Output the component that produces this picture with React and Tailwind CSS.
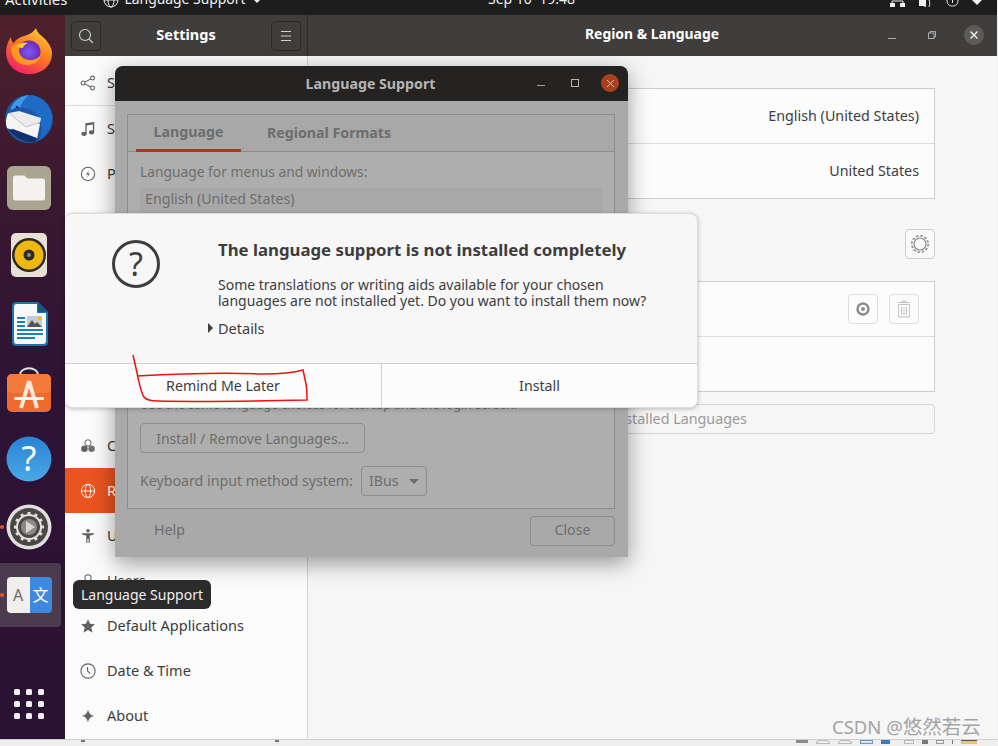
import React from "react";

const font = { fontFamily: '"Noto Sans","Noto Sans CJK SC",sans-serif' };

function Firefox() {
  return (
    <svg width="48" height="48" viewBox="0 0 48 48">
      <defs>
        <linearGradient id="ff1" x1="0.8" y1="0" x2="0.2" y2="1">
          <stop offset="0" stopColor="#ffd23c" />
          <stop offset="0.45" stopColor="#ff7a1f" />
          <stop offset="1" stopColor="#f0186e" />
        </linearGradient>
        <radialGradient id="ff2" cx="0.5" cy="0.5" r="0.6">
          <stop offset="0" stopColor="#7a5bf0" />
          <stop offset="1" stopColor="#6a1fb0" />
        </radialGradient>
      </defs>
      <path d="M31 2c1 5 5 7 9 11 5 5 7 11 7 14 0 13-10 21-23 21S1 39 1 26c0-5 2-11 5-15 0 3 1 5 3 6 2-4 6-6 10-7 4-1 9-3 12-8z" fill="url(#ff1)" />
      <circle cx="24" cy="26" r="11.5" fill="url(#ff2)" />
      <path d="M6 21c5-4 12-5 17-3-5 0-8 2-9 6 0 6 5 10 11 10 5 0 9-2 11-6-1 7-7 11-14 11C12 39 6 31 6 21z" fill="#ff9a1f" />
      <path d="M12 20c3-3 7-4 11-3-3 1-5 3-5 5-2 0-4-1-6-2z" fill="#ffd23c" />
    </svg>
  );
}
function Thunderbird() {
  return (
    <svg width="50" height="50" viewBox="0 0 50 50">
      <circle cx="25" cy="25" r="24" fill="#1b57a8" />
      <path d="M26 1c11 1 21 10 22 22 0 9-4 17-12 22 3-8 2-18-4-25-4-5-11-7-17-6 2-6 6-10 11-13z" fill="#1f6cc6" />
      <path d="M8 12c3-6 9-10 17-11-4 3-7 7-9 12-3 0-6 1-9 3-1-1 0-3 1-4z" fill="#3f9be8" />
      <circle cx="13" cy="13" r="1.200" fill="#102a55" />
      <path d="M4 19l9 3 23 8-3 15-30-11c-2-5-1-10 1-15z" fill="#f5f5f5" />
      <path d="M5 19l10-2 22 7-1 5-14 4z" fill="#ececec" />
      <path d="M5 19l17 14 14-5" fill="none" stroke="#b5b5b5" strokeWidth="0.8" />
      <path d="M5 36c5 6 12 11 20 12 2 0 5 0 7-1l1-3-24-9z" fill="#122f6e" />
    </svg>
  );
}
function Files() {
  return (
    <svg width="46" height="46" viewBox="0 0 46 46">
      <rect x="1" y="1" width="44" height="44" rx="6" fill="#aaa591" />
      <path d="M7 13a2.5 2.5 0 0 1 2.5-2.5h9l3 3H36.500a2.500 2.500 0 0 1 2.500 2.500V33a2.500 2.500 0 0 1-2.500 2.500h-27A2.500 2.500 0 0 1 7 33z" fill="#f4f2ee" />
    </svg>
  );
}
function Rhythmbox() {
  return (
    <svg width="40" height="46" viewBox="0 0 40 46">
      <rect x="2" y="1" width="36" height="44" rx="5" fill="#e6e1d3" />
      <circle cx="20" cy="23" r="17" fill="#2c2a28" />
      <circle cx="20" cy="23" r="14.500" fill="#efb80e" />
      <circle cx="20" cy="23" r="5.500" fill="#2c2a28" />
      <circle cx="20" cy="23" r="2" fill="#8f8a80" />
    </svg>
  );
}
function Writer() {
  return (
    <svg width="40" height="46" viewBox="0 0 40 46">
      <path d="M3 5a4 4 0 0 1 4-4h22l10 10v30a4 4 0 0 1-4 4H7a4 4 0 0 1-4-4z" fill="#1b75a8" />
      <path d="M5 6a3 3 0 0 1 3-3h20v9h9v28a3 3 0 0 1-3 3H8a3 3 0 0 1-3-3z" fill="#f6f8f9" />
      <path d="M29 1l10 10h-10z" fill="#135a85" />
      <g fill="#1f7fb8">
        <rect x="8" y="16" width="8" height="2" />
        <rect x="8" y="20" width="8" height="2" />
        <rect x="8" y="24" width="8" height="2" />
        <rect x="8" y="28" width="26" height="2" />
        <rect x="8" y="32" width="26" height="2" />
        <rect x="8" y="36" width="18" height="2" />
      </g>
      <rect x="18" y="15" width="15" height="11" fill="#c6ccd0" />
      <path d="M18 26l5-7 3 4 2-2 5 5z" fill="#555" />
      <rect x="29" y="16" width="3" height="3" fill="#f0b429" />
    </svg>
  );
}
function Software() {
  return (
    <svg width="46" height="46" viewBox="0 0 46 46">
      <path d="M14 8c0-9 18-9 18 0" fill="none" stroke="#e9dfcf" strokeWidth="1.800" />
      <rect x="1" y="7" width="44" height="38" rx="5" fill="#ef6a2e" />
      <rect x="1" y="7" width="44" height="19" rx="5" fill="#f47a3c" />
      <path d="M23 14L15 41M23 14l8 27" stroke="#fbe9dd" strokeWidth="4" fill="none" />
      <rect x="8" y="30" width="30" height="3" rx="1.500" fill="#fdf3ec" />
    </svg>
  );
}
function Help() {
  return (
    <svg width="46" height="46" viewBox="0 0 46 46">
      <defs>
        <linearGradient id="hp" x1="0" y1="0" x2="0" y2="1">
          <stop offset="0" stopColor="#2a82d4" />
          <stop offset="1" stopColor="#4aa8e6" />
        </linearGradient>
      </defs>
      <circle cx="23" cy="23" r="22.500" fill="url(#hp)" />
      <text x="23" y="35" textAnchor="middle" fontSize="34" fill="#fff" fontFamily="Noto Sans">?</text>
    </svg>
  );
}
function SettingsIcon() {
  const teeth = [0, 30, 60, 90, 120, 150];
  return (
    <svg width="46" height="46" viewBox="0 0 46 46">
      <circle cx="23" cy="23" r="22.500" fill="#e2e0dc" />
      <circle cx="23" cy="23" r="19" fill="#4a4846" />
      <g fill="#e2e0dc">
        {teeth.map((a) => (
          <rect key={a} x="21.500" y="8" width="3" height="30" transform={`rotate(${a} 23 23)`} />
        ))}
      </g>
      <circle cx="23" cy="23" r="13" fill="#e2e0dc" />
      <circle cx="23" cy="23" r="11" fill="#4a4846" />
      <circle cx="23" cy="23" r="8" fill="#8c8a86" />
      <path d="M20 17l9 6-9 6z" fill="#d8d6d2" />
    </svg>
  );
}
function LangIcon() {
  return (
    <div className="w-[45px] h-[36px] flex rounded-[4px] overflow-hidden">
      <div className="w-[23px] bg-[#f1efeb] text-[#6b6b6b] text-[16px] flex items-center justify-center">A</div>
      <div className="w-[22px] bg-[#3f88dd] text-white text-[16px] flex items-center justify-center">文</div>
    </div>
  );
}

function Row({ icon, label, active }) {
  return (
    <div className={active ? "h-[45px] flex items-center pl-[15px] bg-[#e95420] text-white" : "h-[45px] flex items-center pl-[15px] text-[#3d3d3d]"}>
      <span className={active ? "w-[27px] text-white flex" : "w-[27px] text-[#616161] flex"}>{icon}</span>
      <span className="text-[14.5px] whitespace-nowrap">{label}</span>
    </div>
  );
}

const S = (p) => <svg width="16" height="16" viewBox="0 0 18 18" fill="none" stroke="currentColor" strokeWidth="1.200" {...p} />;
const icons = {
  share: <S><circle cx="3.500" cy="9" r="2.200" /><circle cx="14" cy="3.500" r="2.200" /><circle cx="14" cy="14.500" r="2.200" /><path d="M5.500 8l6.500-3.500M5.500 10l6.500 3.500" /></S>,
  music: <S fill="currentColor" stroke="none"><path d="M6 2.500l10-1.500v11.500h-1.500V4L7.500 5v9.500H6z" /><ellipse cx="4.500" cy="14.500" rx="3" ry="2.300" /><ellipse cx="13" cy="12.800" rx="3" ry="2.300" /></S>,
  power: <S><circle cx="9" cy="9" r="7.500" /><path d="M10 4.500L7 9.800h2.200L8 13.500l3-5.300H8.800z" fill="currentColor" stroke="none" /></S>,
  display: <S><rect x="2" y="3" width="14" height="10" rx="2" /></S>,
  blank: <S stroke="none" />,
  color: <S fill="currentColor" stroke="none"><circle cx="9" cy="5.500" r="3.500" fill="none" stroke="currentColor" strokeWidth="1.100" /><circle cx="5" cy="12" r="3.700" /><circle cx="13" cy="12" r="3.700" opacity="0.9" /></S>,
  globe: <svg width="16" height="16" viewBox="0 0 18 18" fill="none" stroke="currentColor" strokeWidth="1"><circle cx="9" cy="9" r="7.500" /><ellipse cx="9" cy="9" rx="3" ry="7.500" /><path d="M1.500 9h15" /></svg>,
  person: <S fill="currentColor" stroke="none"><circle cx="9" cy="3" r="2" /><path d="M2.500 6h13v1.600l-4.500.9V17H9.700v-4.500H8.300V17H7V8.500l-4.500-.9z" /></S>,
  user: <S><circle cx="9" cy="5.500" r="3.500" /><path d="M2.500 16c0-4 3-6 6.500-6s6.500 2 6.500 6" /></S>,
  star: <S fill="currentColor" stroke="none"><path d="M9 1.500l2.300 5 5.500.6-4.100 3.700 1.200 5.400L9 13.500 4.100 16.200l1.200-5.400L1.200 7.100l5.500-.6z" /></S>,
  clock: <S><circle cx="9" cy="9" r="8" /><path d="M8.500 4.500V9l3 3" /></S>,
  about: <S fill="currentColor" stroke="none"><path d="M9 1.500c.8 4.500 2.800 6.700 7 7.500-4.200.8-6.200 3-7 7.500-.8-4.500-2.800-6.700-7-7.500 4.200-.8 6.200-3 7-7.500z" /></S>,
};

const dockItems = [
  ["mt-[2px]", <Firefox />],
  ["mt-[15px]", <Thunderbird />],
  ["mt-[15px]", <Files />],
  ["mt-[13px]", <Rhythmbox />],
  ["mt-[15px]", <Writer />],
  ["mt-[12px]", <Software />],
  ["mt-[15px]", <Help />],
  ["mt-[14px]", <SettingsIcon />],
  ["mt-[14px]", <LangIcon />],
];

function Dock() {
  return (
    <div className="relative w-[65px] shrink-0 flex flex-col items-center pr-[7px] pt-[6px] bg-[linear-gradient(180deg,#4e202b_0%,#3a1830_25%,#2d1336_55%,#2a1233_100%)]">
      <div className="absolute left-0 top-[548px] w-[61px] h-[64px] bg-[#4c3a4f] rounded-r-[4px]" />
      <div className="absolute left-0 top-[510px] w-[4px] h-[4px] rounded-full bg-[#e95420]" />
      <div className="absolute left-0 top-[578px] w-[4px] h-[4px] rounded-full bg-[#e95420]" />
      {dockItems.map(([m, el], i) => (
        <div key={i} className={"relative h-[54px] w-[54px] flex items-center justify-center " + m}>{el}</div>
      ))}
      <div className="mt-auto mb-[20px] grid grid-cols-3 gap-x-[6px] gap-y-[6px] relative">
        {Array.from({ length: 9 }).map((_, i) => (
          <span key={i} className="w-[6px] h-[6px] rounded-[1.500px] bg-[#efefef]" />
        ))}
      </div>
    </div>
  );
}

function Sidebar() {
  return (
    <div className="w-[243px] shrink-0 bg-[#fbfbfb] border-r border-[#d4d4d4] overflow-hidden">
      <div className="pt-[4px]"><Row icon={icons.share} label="Sharing" /></div>
      <div className="h-px bg-[#dcdcdc]" />
      <Row icon={icons.music} label="Sound" />
      <Row icon={icons.power} label="Power" />
      <Row icon={icons.display} label="Displays" />
      <Row icon={icons.blank} label="Mouse & Touchpad" />
      <Row icon={icons.blank} label="Keyboard Shortcuts" />
      <Row icon={icons.blank} label="Printers" />
      <Row icon={icons.blank} label="Removable Media" />
      <div className="h-[2px]" />
      <Row icon={icons.color} label="Color" />
      <Row active icon={icons.globe} label="Region & Language" />
      <Row icon={icons.person} label="Universal Access" />
      <Row icon={icons.user} label="Users" />
      <Row icon={icons.star} label="Default Applications" />
      <Row icon={icons.clock} label="Date & Time" />
      <Row icon={icons.about} label="About" />
    </div>
  );
}

function Content() {
  return (
    <div className="flex-1 bg-[#f6f6f6] pt-[32px] pl-[57px] pr-[62px] text-[#3d3d3d] text-[14.3px]">
      <div className="border border-[#cdcdcd] bg-[#fcfcfc]">
        <div className="h-[55px] flex items-center justify-between px-[15px] border-b border-[#dcdcdc]">
          <span>Language</span><span>English (United States)</span>
        </div>
        <div className="h-[54px] flex items-center justify-between px-[15px]">
          <span>Formats</span><span>United States</span>
        </div>
      </div>
      <div className="h-[82px] pt-[8px] flex items-center justify-between">
        <span className="font-bold">Input Sources</span>
        <div className="w-[30px] h-[30px] border border-[#cfcfcf] rounded-[4px] flex items-center justify-center bg-[#f8f8f8] text-[#8a8a8a]">
          <svg width="20" height="20" viewBox="0 0 20 20" fill="none" stroke="currentColor" strokeWidth="1.200"><circle cx="10" cy="10" r="6" /><circle cx="10" cy="10" r="8.200" strokeDasharray="2.500 1.800" strokeWidth="1.600" /></svg>
        </div>
      </div>
      <div className="border border-[#cdcdcd] bg-[#fcfcfc]">
        <div className="h-[55px] flex items-center justify-end gap-[11px] pr-[15px] border-b border-[#dcdcdc]">
          <div className="w-[30px] h-[30px] border border-[#dedede] rounded-[4px] flex items-center justify-center">
            <svg width="16" height="16" viewBox="0 0 16 16"><circle cx="8" cy="8" r="5.500" fill="none" stroke="#8c8c8c" strokeWidth="2.400" /><circle cx="8" cy="8" r="2" fill="#8c8c8c" /></svg>
          </div>
          <div className="w-[30px] h-[30px] border border-[#dedede] rounded-[4px] flex items-center justify-center">
            <svg width="14" height="18" viewBox="0 0 14 18" fill="none" stroke="#c2c2c2"><path d="M1.500 4.500h11v12.500h-11zM1 2.500h12M5 2.500V1h4v1.500M4.500 7v8M7 7v8M9.500 7v8" /></svg>
          </div>
        </div>
        <div className="h-[54px]" />
      </div>
      <div className="mt-[12px] h-[30px] border border-[#d4d4d4] rounded-[4px] flex items-center justify-center text-[#9a9a9a]">Manage Installed Languages</div>
    </div>
  );
}

function LanguageWindow() {
  return (
    <div className="absolute left-[115px] top-[66px] w-[513px] h-[491px] bg-[#a9a9a9] rounded-t-[8px] shadow-[0_6px_22px_rgba(0,0,0,0.4)] text-[#6d6d6d] flex flex-col">
      <div className="h-[35px] shrink-0 bg-[#252322] rounded-t-[8px] relative flex items-center justify-center">
        <span className="font-bold text-[14.2px] text-[#b5b5b5] pr-[2px]">Language Support</span>
        <div className="absolute right-[9px] top-[8px] flex items-center">
          <span className="w-[8px] h-px bg-[#a0a0a0] mt-[4px] mr-[26px]" />
          <span className="w-[8px] h-[8px] border border-[#b5b5b5] mr-[22px]" />
          <span className="w-[18px] h-[18px] rounded-full bg-[#a8421c] flex items-center justify-center">
            <svg width="9" height="9" viewBox="0 0 9 9" stroke="#d9c2b8" strokeWidth="1"><path d="M1 1l7 7M8 1l-7 7" /></svg>
          </span>
        </div>
      </div>
      <div className="ml-[12px] mr-[13px] mt-[13px] h-[395px] border border-[#8d8d8d] bg-[#aeaeae]">
        <div className="h-[37px] bg-[#a8a8a8] border-b border-[#8d8d8d] flex pl-[8px] text-[14.2px] font-bold">
          <div className="w-[105px] h-[37px] border-b-[3px] border-[#a83c1a] flex items-center justify-center">Language</div>
          <div className="ml-[26px] flex items-center whitespace-nowrap">Regional Formats</div>
        </div>
        <div className="px-[12px] text-[14.2px]">
          <div className="mt-[10px] leading-[20px] text-[13.8px]">Language for menus and windows:</div>
          <div className="mt-[6px] h-[199px] bg-[#a8a8a8] border-b border-[#9a9a9a] pl-[5px] leading-[22px]">English (United States)</div>
          <div className="mt-[10px] text-[12.5px] leading-[16px] whitespace-nowrap">Use the same language choices for startup and the login screen.</div>
          <div className="mt-[10px] w-[225px] h-[30px] border border-[#8d8d8d] rounded-[4px] flex items-center justify-center text-[14px]">Install / Remove Languages...</div>
          <div className="mt-[13px] flex items-center">
            <span>Keyboard input method system:</span>
            <div className="ml-[8px] w-[66px] h-[30px] border border-[#8d8d8d] rounded-[4px] flex items-center justify-between px-[7px]">
              <span>IBus</span>
              <span className="w-0 h-0 border-x-[5px] border-x-transparent border-t-[5px] border-t-[#6d6d6d]" />
            </div>
          </div>
        </div>
      </div>
      <div className="ml-[12px] mr-[13px] mt-[7px] flex items-center justify-between text-[14.2px]">
        <span className="ml-[27px] -mt-[2px]">Help</span>
        <div className="w-[85px] h-[30px] border border-[#8d8d8d] rounded-[4px] flex items-center justify-center pb-[2px]">Close</div>
      </div>
    </div>
  );
}

function Dialog() {
  return (
    <div className="absolute left-[65px] top-[213px] w-[633px] h-[195px] bg-[#f7f7f7] rounded-[8px] border border-[#dcdcdc] border-l-0 shadow-[0_1px_4px_rgba(0,0,0,0.25)] flex flex-col text-[#3d3d3d]">
      <div className="flex-1 flex">
        <div className="w-[153px] shrink-0 pl-[47px] pt-[26px]">
          <div className="w-[48px] h-[48px] rounded-full border-[3px] border-[#3d3d3d] flex items-center justify-center text-[32px] leading-none">?</div>
        </div>
        <div className="pt-[23px]">
          <div className="text-[16.8px] font-bold leading-[26px] whitespace-nowrap">The language support is not installed completely</div>
          <div className="mt-[14px] text-[14px] leading-[16px] whitespace-nowrap">
            <div>Some translations or writing aids available for your chosen</div>
            <div>languages are not installed yet. Do you want to install them now?</div>
          </div>
          <div className="mt-[9px] -ml-[10px] flex items-center text-[14.5px] leading-[20px]">
            <span className="w-0 h-0 border-y-[5px] border-y-transparent border-l-[5px] border-l-[#3d3d3d] mr-[5px]" />
            Details
          </div>
        </div>
      </div>
      <div className="h-[44px] shrink-0 bg-[#fcfcfc] border-t border-[#cfcfcf] rounded-b-[8px] flex text-[14.2px]">
        <div className="w-[317px] border-r border-[#cfcfcf] flex items-center justify-center">Remind Me Later</div>
        <div className="flex-1 flex items-center justify-center">Install</div>
      </div>
    </div>
  );
}

export default function App() {
  return (
    <div style={font} className="relative w-[998px] h-[746px] overflow-hidden bg-[#f2f2f2]">
      <div className="w-[997px] h-[746px] flex flex-col">
        <div className="h-[15px] shrink-0 bg-[#1d1d1d] overflow-hidden relative text-[#f0f0f0] flex justify-between">
          <div className="flex -mt-[12px] h-[22px] leading-[22px]">
            <span className="ml-[5px] text-[15px]">Activities</span>
            <span className="ml-[35px] flex items-center text-[13.9px]">
              <svg className="mt-[2px]" width="16" height="16" viewBox="0 0 16 16" fill="none" stroke="#f0f0f0"><circle cx="8" cy="8" r="7" /><ellipse cx="8" cy="8" rx="3" ry="7" /><path d="M1 8h14" /></svg>
              <span className="ml-[6px]">Language Support</span>
              <span className="ml-[6px] mt-[3px] w-0 h-0 border-x-[5px] border-x-transparent border-t-[5px] border-t-[#f0f0f0]" />
            </span>
          </div>
          <div className="-mt-[12px] h-[22px] leading-[22px] text-[14px] absolute left-[488px]">Sep 10&nbsp;&nbsp;19:48</div>
          <div className="flex items-start gap-[13px] pr-[15px]">
            <svg width="16" height="7" viewBox="0 0 16 7" fill="#f0f0f0"><rect x="0" y="3" width="5" height="4" /><rect x="10" y="3" width="5" height="4" /><path d="M2 3V1h11v2" fill="none" stroke="#f0f0f0" /></svg>
            <svg width="14" height="7" viewBox="0 0 14 7" fill="#f0f0f0"><path d="M0 0h7v7L4 6H0z" /><path d="M10 0c1 2 1 5 0 7" fill="none" stroke="#f0f0f0" /></svg>
            <svg width="13" height="7" viewBox="0 0 13 7" fill="none" stroke="#f0f0f0"><path d="M1 0c0 4 2 6 5.500 6S12 4 12 0M6.500 0v3" /></svg>
            <span className="w-0 h-0 border-x-[5px] border-x-transparent border-t-[5px] border-t-[#f0f0f0]" />
          </div>
        </div>
        <div className="flex-1 flex min-h-0">
          <Dock />
          <div className="flex-1 flex flex-col min-w-0">
            <div className="h-[41px] shrink-0 bg-[#3f3e3c] flex text-white">
              <div className="w-[243px] shrink-0 border-r border-[#2e2d2b] flex items-center justify-between px-[6px]">
                <div className="w-[30px] h-[30px] border border-[#2a2928] rounded-[4px] flex items-center justify-center">
                  <svg width="16" height="16" viewBox="0 0 16 16" fill="none" stroke="#cfcfcf" strokeWidth="1.100"><circle cx="7" cy="7" r="5.500" /><path d="M11 11l4 4" /></svg>
                </div>
                <span className="font-bold text-[14.5px] pb-[2px]">Settings</span>
                <div className="w-[30px] h-[30px] border border-[#2a2928] rounded-[4px] flex items-center justify-center">
                  <svg width="12" height="10" viewBox="0 0 12 10" stroke="#cfcfcf"><path d="M1 .5h10M1 5h10M1 9.500h10" /></svg>
                </div>
              </div>
              <div className="flex-1 relative flex items-center justify-center">
                <span className="font-bold text-[13.9px] pb-[2px] pr-[1px]">Region & Language</span>
                <div className="absolute right-[13px] top-[10px] flex items-center">
                  <span className="w-[8px] h-px bg-[#a8a8a8] mt-[6px] mr-[32px]" />
                  <svg className="mr-[28px]" width="8" height="8" viewBox="0 0 8 8" fill="none" stroke="#a8a8a8"><rect x="0.500" y="2" width="5.500" height="5.500" /><path d="M2 2V.5h5.500V6H6" /></svg>
                  <span className="w-[20px] h-[20px] rounded-full bg-[#5d5c5a] flex items-center justify-center">
                    <svg width="10" height="10" viewBox="0 0 10 10" stroke="#f4f4f4" strokeWidth="1.300"><path d="M1.500 1.500l7 7M8.500 1.500l-7 7" /></svg>
                  </span>
                </div>
              </div>
            </div>
            <div className="flex-1 flex min-h-0">
              <Sidebar />
              <Content />
            </div>
          </div>
        </div>
        <div className="h-[7px] shrink-0 bg-[#efefef] border-t border-[#cfcfcf] overflow-hidden flex items-start relative">
          <span className="ml-[81px] w-[4px] h-[2px] bg-[#777]" />
          <span className="ml-[190px] w-[4px] h-[2px] bg-[#777]" />
          <div className="ml-auto mr-[20px] flex items-start gap-[8px]">
            <span className="w-[12px] h-[3px] bg-[#8a8a8a]" />
            <span className="w-[14px] h-[4px] rounded-t-full border border-[#bbb]" />
            <span className="w-[14px] h-[4px] rounded-t-full border border-[#bbb]" />
            <span className="w-[13px] h-[4px] border border-[#6f95b8] bg-[#dbe6f0]" />
            <span className="w-[9px] h-[4px] bg-[#3b7bbd]" />
            <span className="ml-[6px] w-[10px] h-[4px] border border-[#bbb]" />
            <span className="w-[6px] h-[4px] bg-[#777]" />
            <span className="w-[8px] h-[4px] border border-[#999]" />
            <span className="w-[1px] h-[4px] bg-[#777]" />
            <span className="w-[16px] h-[4px] bg-[#e0c878] border-t border-[#555]" />
          </div>
        </div>
      </div>

      <LanguageWindow />
      <Dialog />

      <div className="absolute left-[73px] top-[580px] w-[138px] h-[29px] rounded-[6px] bg-[#2b2b2b] text-[#efefef] text-[14px] flex items-center justify-center whitespace-nowrap">Language Support</div>

      <svg className="absolute left-0 top-0 pointer-events-none" width="998" height="746" fill="none" stroke="#f01010" strokeWidth="1.500">
        <path d="M133 355c2 9 4 17 5 23 2 7 3 15 6 19 2 3 6 4 14 4 40 1 100 0 149-1 0-6 0-11-1-16l-3-14c-10 3-20 4-40 4-45-2-90 0-126 2" />
      </svg>

      <div className="absolute left-[832px] top-[714px] text-[18.5px] leading-[26px] text-[#8f8f8f] whitespace-nowrap opacity-80">CSDN @<span className="text-[19.5px]">悠然若云</span></div>
    </div>
  );
}
